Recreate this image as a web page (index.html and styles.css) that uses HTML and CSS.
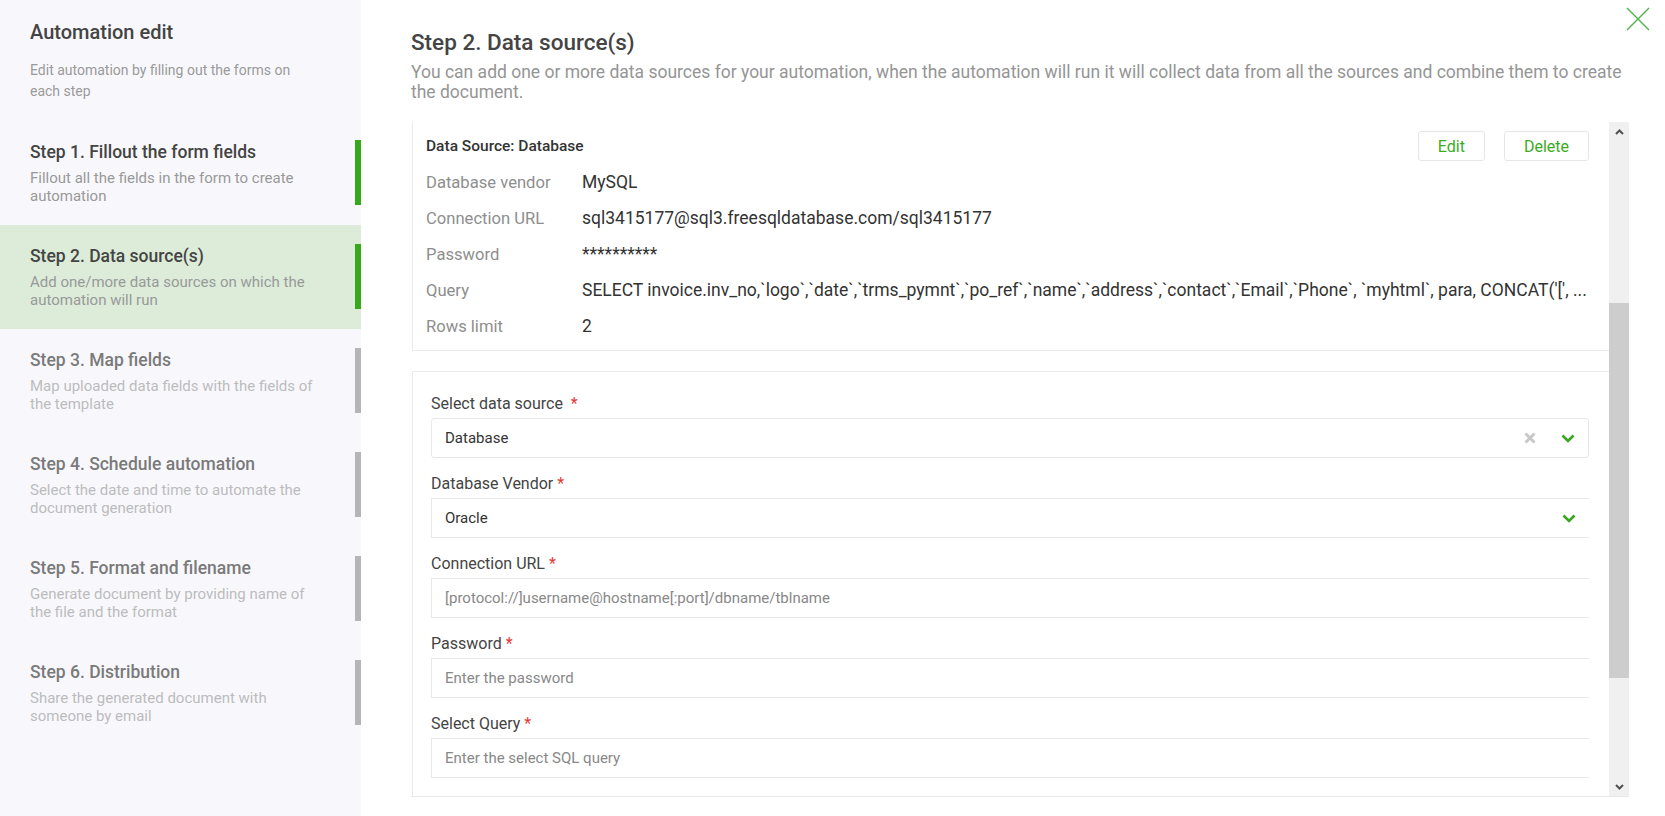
FILE: index.html
```html
<!DOCTYPE html>
<html lang="en">
<head>
  <meta charset="UTF-8" />
  <title>Automation edit</title>
  <link rel="stylesheet" href="styles.css">
</head>
<body>

  <div class="sidebar">
    <div class="sidebar-head">
      <h1>Automation edit</h1>
      <p>Edit automation by filling out the forms on each step</p>
    </div>

    <div class="step done">
      <div class="step-text">
        <h2>Step 1. Fillout the form fields</h2>
        <p>Fillout all the fields in the form to create automation</p>
      </div>
      <span class="bar"></span>
    </div>
    <div class="step done active">
      <div class="step-text">
        <h2>Step 2. Data source(s)</h2>
        <p>Add one/more data sources on which the automation will run</p>
      </div>
      <span class="bar"></span>
    </div>
    <div class="step">
      <div class="step-text">
        <h2>Step 3. Map fields</h2>
        <p>Map uploaded data fields with the fields of the template</p>
      </div>
      <span class="bar"></span>
    </div>
    <div class="step">
      <div class="step-text">
        <h2>Step 4. Schedule automation</h2>
        <p>Select the date and time to automate the document generation</p>
      </div>
      <span class="bar"></span>
    </div>
    <div class="step">
      <div class="step-text">
        <h2>Step 5. Format and filename</h2>
        <p>Generate document by providing name of the file and the format</p>
      </div>
      <span class="bar"></span>
    </div>
    <div class="step">
      <div class="step-text">
        <h2>Step 6. Distribution</h2>
        <p>Share the generated document with someone by email</p>
      </div>
      <span class="bar"></span>
    </div>
  </div>

  <div class="main">
    <button class="close" title="Close">
      <svg width="24" height="24" viewBox="0 0 24 24"><path d="M1 1L23 23M23 1L1 23" stroke="#4cb347" stroke-width="1.4" fill="none"/></svg>
    </button>

    <h1>Step 2. Data source(s)</h1>
    <p class="intro">You can add one or more data sources for your automation, when the automation will run it will collect data from all the sources and combine them to create the document.</p>

    <div class="scroll-area">
      <div class="scroll-content">

        <div class="card summary">
          <div class="summary-head">
            <span class="summary-title">Data Source: Database</span>
            <div class="actions">
              <button class="btn">Edit</button>
              <button class="btn">Delete</button>
            </div>
          </div>
          <div class="row"><span class="key">Database vendor</span><span class="val">MySQL</span></div>
          <div class="row"><span class="key">Connection URL</span><span class="val">sql3415177@sql3.freesqldatabase.com/sql3415177</span></div>
          <div class="row"><span class="key">Password</span><span class="val">**********</span></div>
          <div class="row"><span class="key">Query</span><span class="val">SELECT invoice.inv_no,`logo`,`date`,`trms_pymnt`,`po_ref`,`name`,`address`,`contact`,`Email`,`Phone`, `myhtml`, para, CONCAT('[', ...</span></div>
          <div class="row"><span class="key">Rows limit</span><span class="val">2</span></div>
        </div>

        <div class="card form">
          <div class="field">
            <label>Select data source &nbsp;<span class="req">*</span></label>
            <div class="input select full">
              <span class="value">Database</span>
              <svg class="clear" width="12" height="12" viewBox="0 0 12 12"><path d="M1.5 1.5L10.5 10.5M10.5 1.5L1.5 10.5" stroke="#c8c8c8" stroke-width="3" fill="none"/></svg>
              <svg class="chev" width="14" height="9" viewBox="0 0 14 9"><path d="M1.5 1.5L7 7L12.5 1.5" stroke="#37a61c" stroke-width="2.6" fill="none"/></svg>
            </div>
          </div>
          <div class="field">
            <label>Database Vendor <span class="req">*</span></label>
            <div class="input select">
              <span class="value">Oracle</span>
              <svg class="chev" width="14" height="9" viewBox="0 0 14 9"><path d="M1.5 1.5L7 7L12.5 1.5" stroke="#37a61c" stroke-width="2.6" fill="none"/></svg>
            </div>
          </div>
          <div class="field">
            <label>Connection URL <span class="req">*</span></label>
            <div class="input"><span class="placeholder">[protocol://]username@hostname[:port]/dbname/tblname</span></div>
          </div>
          <div class="field">
            <label>Password <span class="req">*</span></label>
            <div class="input"><span class="placeholder">Enter the password</span></div>
          </div>
          <div class="field">
            <label>Select Query <span class="req">*</span></label>
            <div class="input"><span class="placeholder">Enter the select SQL query</span></div>
          </div>
          <div class="field">
            <label>Limit Rows</label>
            <div class="input"><span class="placeholder">Enter the rows limit</span></div>
          </div>
        </div>

      </div>

      <div class="scrollbar">
        <div class="sb-btn">
          <svg width="9" height="6" viewBox="0 0 9 6"><path d="M1 5L4.5 1.5L8 5" stroke="#505050" stroke-width="2" fill="none"/></svg>
        </div>
        <div class="sb-track-top"></div>
        <div class="sb-thumb"></div>
        <div class="sb-track-bottom"></div>
        <div class="sb-btn">
          <svg width="9" height="6" viewBox="0 0 9 6"><path d="M1 1L4.5 4.5L8 1" stroke="#505050" stroke-width="2" fill="none"/></svg>
        </div>
      </div>
    </div>
  </div>

</body>
</html>
```

FILE: styles.css
```css
* {
  box-sizing: border-box;
}
body {
  margin: 0;
  height: 816px;
  display: flex;
  overflow: hidden;
  font-family: Roboto, "Liberation Sans", sans-serif;
  background-color: #fff;
  color: #333;
}

/* left column with the steps */
.sidebar {
  width: 361px;
  flex-shrink: 0;
  background-color: #f8f8fc;
}
.sidebar-head {
  padding: 20px 30px 19px 30px;
}
.sidebar-head h1 {
  margin: 0;
  font-size: 20px;
  line-height: 24px;
  font-weight: 500;
  color: #444;
}
.sidebar-head p {
  margin: 16px 0 0 0;
  width: 275px;
  font-size: 14px;
  line-height: 21px;
  color: #9a9a9a;
}
.step {
  height: 104px;
  display: flex;
  justify-content: space-between;
  padding-left: 30px;
}
.step.active {
  background-color: #dcecd9;
}
.step-text {
  padding-top: 21px;
}
.step h2 {
  margin: 0;
  font-size: 17.5px;
  line-height: 20px;
  font-weight: 500;
  color: #7a7a7a;
}
.step p {
  margin: 7px 0 0 0;
  width: 288px;
  font-size: 15px;
  line-height: 18px;
  color: #bcbcbc;
}
.step.done h2 {
  color: #444;
}
.step.done p {
  color: #999;
}
.bar {
  width: 6px;
  height: 65px;
  margin-top: 19px;
  background-color: #b5b5b5;
}
.step.done .bar {
  background-color: #36a81c;
}

/* right side */
.main {
  flex: 1;
  position: relative;
  padding: 28px 36px 0 50px;
  display: flex;
  flex-direction: column;
}
.main h1 {
  margin: 0;
  font-size: 22.5px;
  line-height: 28px;
  font-weight: 500;
  color: #444;
}
.intro {
  margin: 6px 0 0 0;
  font-size: 17.5px;
  line-height: 20px;
  color: #959595;
}
.close {
  position: absolute;
  top: 7px;
  right: 15px;
  padding: 0;
  border: none;
  background: none;
  cursor: pointer;
}

.scroll-area {
  margin-top: 20px;
  height: 675px;
  display: flex;
  border-bottom: 1px solid #e8e8e8;
}
.scroll-content {
  flex: 1;
  overflow: hidden;
  padding-left: 1px;
}
.card {
  border: 1px solid #ebebeb;
  border-right: none;
  background-color: #fff;
}
.summary {
  border-top: none;
  padding: 9px 20px 6px 13px;
}
.summary-head {
  height: 30px;
  display: flex;
  align-items: center;
  justify-content: space-between;
  margin-bottom: 3px;
}
.summary-title {
  font-size: 15.5px;
  font-weight: 500;
  color: #333;
}
.actions {
  display: flex;
  gap: 19px;
}
.btn {
  height: 30px;
  padding: 0 19px;
  font-family: inherit;
  font-size: 16px;
  color: #3aab24;
  background-color: #fff;
  border: 1px solid #e6e6e6;
  border-radius: 3px;
}
.row {
  height: 36px;
  display: flex;
  align-items: center;
}
.key {
  width: 156px;
  flex-shrink: 0;
  font-size: 16.6px;
  color: #8e8e8e;
}
.val {
  font-size: 17.5px;
  color: #333;
  white-space: nowrap;
}

.form {
  margin-top: 20px;
  padding: 22px 20px 0 18px;
}
.field {
  margin-bottom: 16px;
}
.field label {
  display: block;
  font-size: 16px;
  line-height: 20px;
  color: #444;
  margin-bottom: 4px;
}
.req {
  color: #e53935;
}
.input {
  height: 40px;
  display: flex;
  align-items: center;
  padding: 0 13px;
  border: 1px solid #e8e8e8;
  border-right: none;
  font-size: 15px;
}
.input.full {
  border-right: 1px solid #e8e8e8;
  border-radius: 3px;
}
.input .value {
  flex: 1;
  color: #333;
}
.placeholder {
  color: #888;
}
.clear {
  margin-right: 25px;
}

/* fake scrollbar of the list */
.scrollbar {
  width: 20px;
  flex-shrink: 0;
  display: flex;
  flex-direction: column;
  background-color: #f0f0f0;
}
.sb-btn {
  height: 19px;
  display: flex;
  align-items: center;
  justify-content: center;
}
.sb-track-top {
  height: 162px;
}
.sb-thumb {
  height: 375px;
  background-color: #cdcdcd;
}
.sb-track-bottom {
  flex: 1;
}
```
